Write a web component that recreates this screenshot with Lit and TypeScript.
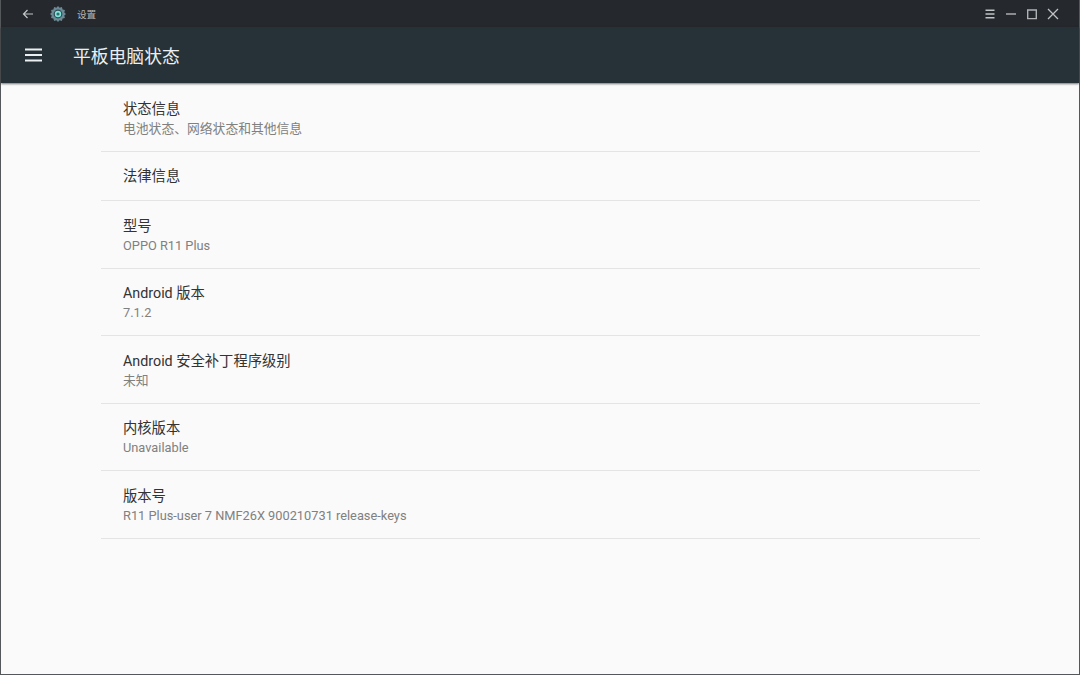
import { LitElement, html, css, svg } from "lit";
import { customElement } from "lit/decorators.js";

const rows = [
  { t: "状态信息", s: "电池状态、网络状态和其他信息" },
  { t: "法律信息", s: "" },
  { t: "型号", s: "OPPO R11 Plus" },
  { t: "Android 版本", s: "7.1.2" },
  { t: "Android 安全补丁程序级别", s: "未知" },
  { t: "内核版本", s: "Unavailable" },
  { t: "版本号", s: "R11 Plus-user 7 NMF26X 900210731 release-keys" },
];

@customElement("app-root")
export class AppRoot extends LitElement {
  static styles = css`
    :host {
      display: block;
      width: 1080px;
      height: 675px;
      font-family: Roboto, "Noto Sans CJK SC", sans-serif;
      overflow: hidden;
    }
    .win {
      box-sizing: border-box;
      width: 1080px;
      height: 675px;
      display: flex;
      flex-direction: column;
      background: #fafafa;
      border-left: 1px solid #55585a;
      border-right: 1px solid #55585a;
      border-bottom: 1px solid #55585a;
    }
    .titlebar {
      height: 27px;
      flex: none;
      background: #25282c;
      display: flex;
      align-items: center;
      color: #b4b6b8;
      font-size: 9.6px;
      padding: 0 20px;
    }
    .titlebar svg { display: block; flex: none; }
    .back { margin-right: 14px; }
    .gear { margin-right: 10px; }
    .spacer { flex: 1; }
    .ctrls { display: flex; align-items: center; gap: 9px; }
    .appbar {
      height: 56px;
      flex: none;
      background: #263238;
      display: flex;
      align-items: center;
      color: #eceff1;
      font-size: 17.8px;
      padding-left: 23px;
      gap: 31px;
      box-shadow: 0 1px 2px rgba(0, 0, 0, 0.55);
      position: relative;
    }
    .list {
      margin: 0 99px 0 100px;
      padding-top: 1.6px;
    }
    .row {
      box-sizing: border-box;
      height: 67.5px;
      border-bottom: 1px solid #e4e4e4;
      padding: 2px 0 0 22px;
      display: flex;
      flex-direction: column;
      justify-content: center;
    }
    .row.single { height: 49px; padding-top: 0; }
    .t { font-size: 14.3px; line-height: 20px; color: #333333; }
    .s { font-size: 12.8px; line-height: 19.4px; color: #808080; }
  `;

  render() {
    return html`<div class="win">
      <div class="titlebar">
        <svg class="back" width="14" height="14" viewBox="0 0 14 14" fill="none" stroke="#c4c6c8" stroke-width="1.2">
          <path d="M12 7H2.5M6.5 3L2.5 7l4 4" />
        </svg>
        <svg class="gear" width="18" height="18" viewBox="0 0 18 18">
          <path fill="#6c8a96" d="M9 1l1.6 1.7 2.3-.6.7 2.3 2.3.7-.6 2.3L17 9l-1.7 1.6.6 2.3-2.3.7-.7 2.3-2.3-.6L9 17l-1.6-1.7-2.3.6-.7-2.3-2.3-.7.6-2.3L1 9l1.7-1.6-.6-2.3 2.3-.7.7-2.3 2.3.6z" />
          <circle cx="9" cy="9" r="4.4" fill="#2f4a52" />
          <circle cx="9" cy="9" r="3.2" fill="#7fe6dc" />
          <circle cx="9" cy="9" r="1.6" fill="#3d6a70" />
        </svg>
        <span>设置</span>
        <span class="spacer"></span>
        <div class="ctrls">
          <svg width="12" height="12" viewBox="0 0 12 12" stroke="#c0c2c4" stroke-width="1.4"><path d="M1.5 2.2h9M1.5 6h9M1.5 9.8h9" /></svg>
          <svg width="12" height="12" viewBox="0 0 12 12" stroke="#c0c2c4" stroke-width="1.3"><path d="M1 6h10" /></svg>
          <svg width="12" height="12" viewBox="0 0 12 12" fill="none" stroke="#b0b2b4" stroke-width="1.4"><path d="M1.7 2h8.6v8.6H1.7z" /></svg>
          <svg width="12" height="12" viewBox="0 0 12 12" stroke="#c0c2c4" stroke-width="1.3"><path d="M1 1l10 10M11 1L1 11" /></svg>
        </div>
      </div>
      <div class="appbar">
        <svg width="18" height="18" viewBox="0 0 18 18" stroke="#eceff1" stroke-width="1.8">${svg`<path d="M1 3.5h17M1 9h17M1 14.5h17" />`}</svg>
        <span>平板电脑状态</span>
      </div>
      <div class="list">
        ${rows.map(
          (r) => html`<div class="row ${r.s ? "" : "single"}">
            <div class="t">${r.t}</div>
            ${r.s ? html`<div class="s">${r.s}</div>` : ""}
          </div>`
        )}
      </div>
    </div>`;
  }
}
